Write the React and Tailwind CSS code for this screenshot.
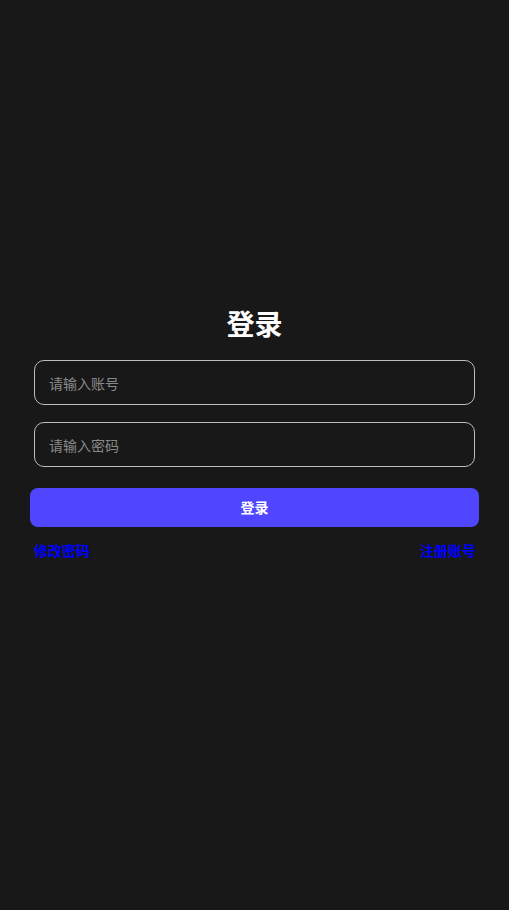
export default function App() {
  return (
    <div
      className="min-h-[910px] w-full bg-[#181818] pt-[303px] px-[30px]"
      style={{ fontFamily: '"Noto Sans CJK SC", "Noto Sans", sans-serif' }}
    >
      <h1 className="text-center text-[28px] font-bold leading-[40px] text-white">登录</h1>
      <div className="mt-[17px] px-[4px]">
        <input
          className="block h-[45px] w-full rounded-[10px] border border-[#bdbdbd] bg-transparent px-[14px] text-[14px] text-white placeholder-[#8a8a8a] outline-none"
          placeholder="请输入账号"
        />
        <input
          type="password"
          className="mt-[17px] block h-[45px] w-full rounded-[10px] border border-[#bdbdbd] bg-transparent px-[14px] text-[14px] text-white placeholder-[#8a8a8a] outline-none"
          placeholder="请输入密码"
        />
      </div>
      <button className="mt-[21px] block h-[39px] w-full rounded-[8px] bg-[#5046ff] text-[14px] font-bold text-white">
        登录
      </button>
      <div className="mt-[13px] flex justify-between pl-[4px] pr-[3px]">
        <span className="text-[14px] font-bold leading-[20px] text-[#0000ff]">修改密码</span>
        <span className="text-[14px] font-bold leading-[20px] text-[#0000ff]">注册账号</span>
      </div>
    </div>
  );
}
